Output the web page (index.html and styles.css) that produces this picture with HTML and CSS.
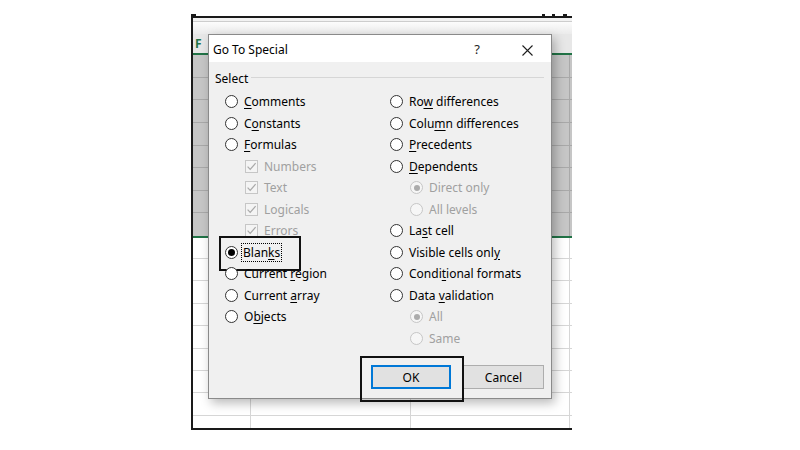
FILE: index.html
```html
<!DOCTYPE html>
<html lang="en">
<head>
<meta charset="utf-8">
<title>Go To Special</title>
<link rel="stylesheet" href="styles.css">
</head>
<body>
<div class="stage">
  <div class="sheet">
    <div class="marks">
      <span class="mark m-left"></span>
      <span class="spacer"></span>
      <span class="mark m1"></span>
      <span class="mark m2"></span>
      <span class="mark m3"></span>
    </div>
    <div class="grid">
      <div class="strip"></div>
      <div class="colhead"><span class="colletter">F</span></div>
      <div class="sel">
        <div class="srow"></div><div class="srow"></div><div class="srow"></div><div class="srow"></div>
        <div class="srow"></div><div class="srow"></div><div class="srow"></div><div class="srow last"></div>
      </div>
      <div class="plain">
        <div class="prow first"></div>
        <div class="prow"></div><div class="prow"></div><div class="prow"></div><div class="prow"></div>
        <div class="prow"></div><div class="prow"></div><div class="prow"></div>
        <div class="prow tail"></div>
      </div>
    </div>
  </div>

  <div class="dialog">
    <div class="titlebar">
      <span class="title">Go To Special</span>
      <span class="tbtn help">?</span>
      <span class="tbtn close"><svg width="11" height="11" viewBox="0 0 11 11"><path d="M0.5 0.5L10.5 10.5M10.5 0.5L0.5 10.5" stroke="#1e1e1e" stroke-width="1.1" fill="none"/></svg></span>
    </div>
    <div class="body">
      <div class="group-head"><span class="group-label">Select</span><span class="gline"></span></div>
      <div class="cols">
        <div class="col col-left">
          <div class="opt"><span class="radio"></span><span><u>C</u>omments</span></div>
          <div class="opt"><span class="radio"></span><span>C<u>o</u>nstants</span></div>
          <div class="opt"><span class="radio"></span><span><u>F</u>ormulas</span></div>
          <div class="opt sub dis"><svg class="check" viewBox="0 0 13 13"><rect x="0.5" y="0.5" width="12" height="12" fill="#f4f4f4" stroke="#c6c6c6"/><path d="M2.6 6.6L5.2 9.4L10.6 3.2" stroke="#a9a9a9" stroke-width="1.2" fill="none"/></svg><span>Numbers</span></div>
          <div class="opt sub dis"><svg class="check" viewBox="0 0 13 13"><rect x="0.5" y="0.5" width="12" height="12" fill="#f4f4f4" stroke="#c6c6c6"/><path d="M2.6 6.6L5.2 9.4L10.6 3.2" stroke="#a9a9a9" stroke-width="1.2" fill="none"/></svg><span>Text</span></div>
          <div class="opt sub dis"><svg class="check" viewBox="0 0 13 13"><rect x="0.5" y="0.5" width="12" height="12" fill="#f4f4f4" stroke="#c6c6c6"/><path d="M2.6 6.6L5.2 9.4L10.6 3.2" stroke="#a9a9a9" stroke-width="1.2" fill="none"/></svg><span>Logicals</span></div>
          <div class="opt sub dis"><svg class="check" viewBox="0 0 13 13"><rect x="0.5" y="0.5" width="12" height="12" fill="#f4f4f4" stroke="#c6c6c6"/><path d="M2.6 6.6L5.2 9.4L10.6 3.2" stroke="#a9a9a9" stroke-width="1.2" fill="none"/></svg><span>Errors</span></div>
          <div class="opt marked"><span class="radio on"></span><span class="focus">Blan<u>k</u>s</span></div>
          <div class="opt"><span class="radio"></span><span>Current <u>r</u>egion</span></div>
          <div class="opt"><span class="radio"></span><span>Current <u>a</u>rray</span></div>
          <div class="opt"><span class="radio"></span><span>O<u>b</u>jects</span></div>
        </div>
        <div class="col col-right">
          <div class="opt"><span class="radio"></span><span>Ro<u>w</u> differences</span></div>
          <div class="opt"><span class="radio"></span><span>Colu<u>m</u>n differences</span></div>
          <div class="opt"><span class="radio"></span><span><u>P</u>recedents</span></div>
          <div class="opt"><span class="radio"></span><span><u>D</u>ependents</span></div>
          <div class="opt sub dis"><span class="radio on"></span><span>Direct only</span></div>
          <div class="opt sub dis"><span class="radio"></span><span>All levels</span></div>
          <div class="opt"><span class="radio"></span><span>La<u>s</u>t cell</span></div>
          <div class="opt"><span class="radio"></span><span>Visible cells onl<u>y</u></span></div>
          <div class="opt"><span class="radio"></span><span>Condi<u>t</u>ional formats</span></div>
          <div class="opt"><span class="radio"></span><span>Data <u>v</u>alidation</span></div>
          <div class="opt sub dis"><span class="radio on"></span><span>All</span></div>
          <div class="opt sub dis"><span class="radio"></span><span>Same</span></div>
        </div>
      </div>
      <div class="buttons">
        <button class="btn btn-ok">OK</button>
        <button class="btn btn-cancel">Cancel</button>
      </div>
    </div>
  </div>
</div>
</body>
</html>
```

FILE: styles.css
```css
* { box-sizing: border-box; }
html, body { margin: 0; padding: 0; background: #ffffff; }
body {
  font-family: "Noto Sans", "Open Sans", sans-serif;
  font-size: 12px;
  color: #000;
}
.stage { position: relative; width: 800px; height: 450px; overflow: hidden; }

/* background worksheet */
.sheet { width: 381px; margin: 14px 0 0 191px; }
.marks { display: flex; height: 2px; }
.mark { height: 2px; background: #1a1a1a; }
.m-left { width: 5px; }
.spacer { flex: 1; }
.m1 { width: 3px; margin-right: 7px; }
.m2 { width: 3px; margin-right: 8px; }
.m3 { width: 4px; margin-right: 5px; }

.grid {
  border-top: 2px solid #1a1a1a;
  border-left: 2px solid #1a1a1a;
  border-bottom: 2px solid #1a1a1a;
}
.strip {
  height: 16px;
  background: linear-gradient(to bottom, #f2f2f2 0, #f2f2f2 3px, #cdcdcd 3px, #cdcdcd 4px, #fcfcfc 4px, #ebebeb 100%);
}
.colhead {
  height: 21px;
  background: #e7e7e7;
  border-bottom: 2px solid #217346;
  padding-left: 2px;
}
.colletter {
  display: block;
  line-height: 19px;
  font-weight: bold;
  font-size: 12px;
  color: #217346;
}
.sel {
  background-color: #c6c6c6;
  background-image: linear-gradient(#a9a9a9, #a9a9a9);
  background-size: 1px 100%;
  background-position: 376px 0;
  background-repeat: no-repeat;
  border-bottom: 2px solid #217346;
}
.srow { height: 22.625px; border-bottom: 1px solid #a9a9a9; }
.srow.last { border-bottom: none; }
.plain {
  background-color: #ffffff;
  background-image:
    linear-gradient(#d6d6d6, #d6d6d6),
    linear-gradient(#d6d6d6, #d6d6d6),
    linear-gradient(#d6d6d6, #d6d6d6);
  background-size: 1px 100%, 1px 100%, 1px 100%;
  background-position: 57px 0, 217px 0, 376px 0;
  background-repeat: no-repeat;
}
.prow { height: 22.4px; border-bottom: 1px solid #d6d6d6; }
.prow.first { height: 21px; }
.prow.tail { height: 12.2px; border-bottom: none; }

/* dialog */
.dialog {
  position: absolute;
  left: 208px;
  top: 34px;
  width: 344px;
  height: 365px;
  border: 1px solid #8a8a8a;
  background: #f0f0f0;
  box-shadow: 3px 4px 10px rgba(0, 0, 0, 0.28);
  display: flex;
  flex-direction: column;
  z-index: 2;
}
.titlebar {
  height: 27px;
  background: #ffffff;
  display: flex;
  align-items: center;
  padding-left: 4px;
  padding-top: 1px;
}
.title { flex: 1; color: #000; }
.tbtn {
  width: 48px;
  height: 26px;
  display: flex;
  align-items: center;
  justify-content: center;
  color: #1e1e1e;
}
.help { margin-right: 2px; font-size: 13px; }
.close svg { display: block; margin-top: 2px; }

.body {
  flex: 1;
  display: flex;
  flex-direction: column;
  padding: 8px 7px 9px 6px;
}
.group-head { display: flex; align-items: center; height: 16px; }
.gline { flex: 1; height: 1px; background: #d6d6d6; margin: 0 0 2px 3px; }

.cols { display: flex; margin: 5px 0 0 10px; }
.col-left { width: 165px; }
.col-right { flex: 1; }
.opt {
  position: relative;
  height: 21.5px;
  display: flex;
  align-items: center;
  white-space: nowrap;
}
.opt.sub { padding-left: 20px; }
.radio {
  flex: none;
  width: 13px;
  height: 13px;
  margin-right: 6px;
  border: 1px solid #333333;
  border-radius: 50%;
  background: #ffffff;
  display: flex;
  align-items: center;
  justify-content: center;
}
.radio.on::after {
  content: "";
  width: 7px;
  height: 7px;
  border-radius: 50%;
  background: #000;
}
.dis { color: #a0a0a0; }
.dis .radio { border-color: #c6c6c6; background: #f6f6f6; }
.dis .radio.on::after { width: 6px; height: 6px; background: #acacac; }
.check { flex: none; width: 13px; height: 13px; margin-right: 6px; display: block; }
u { text-underline-offset: 2px; }

.focus { outline: 1px dotted #000; padding: 0 1px; margin-left: -2px; }
.marked::before {
  content: "";
  position: absolute;
  left: -6px;
  top: -6px;
  width: 78px;
  height: 31px;
  border: 2px solid #111;
}

.buttons {
  margin-top: auto;
  display: flex;
  justify-content: flex-end;
  gap: 12px;
}
.btn {
  height: 24px;
  margin: 0;
  padding: 0;
  background: #e1e1e1;
  border: 1px solid #adadad;
  font: inherit;
  color: #000;
  display: flex;
  align-items: center;
  justify-content: center;
}
.btn-ok { position: relative; width: 80px; border: 2px solid #0078d7; }
.btn-cancel { width: 81px; }
.btn-ok::after {
  content: "";
  position: absolute;
  left: -13px;
  top: -11px;
  width: 100px;
  height: 42px;
  border: 2px solid #111;
}
```
